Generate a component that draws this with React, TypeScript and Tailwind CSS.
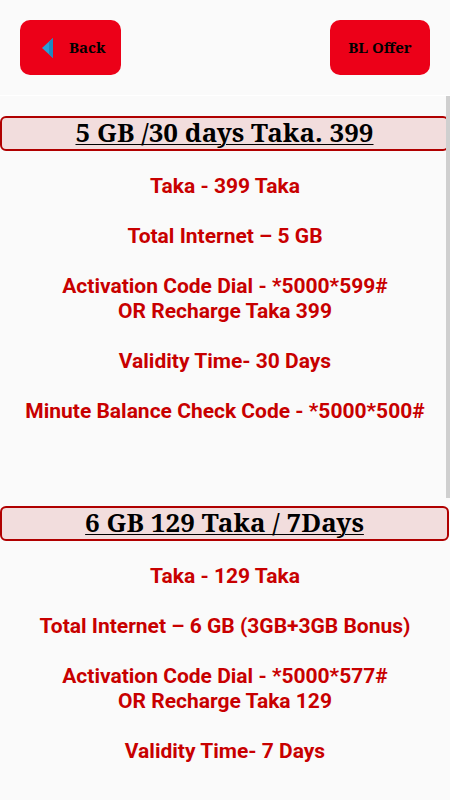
const PACKS = [
  {
    title: '5 GB /30 days Taka. 399',
    lines: [
      ['Taka - 399 Taka'],
      ['Total Internet – 5 GB'],
      ['Activation Code Dial - *5000*599#', 'OR Recharge Taka 399'],
      ['Validity Time- 30 Days'],
      ['Minute Balance Check Code - *5000*500#'],
    ],
  },
  {
    title: '6 GB 129 Taka / 7Days',
    lines: [
      ['Taka - 129 Taka'],
      ['Total Internet – 6 GB (3GB+3GB Bonus)'],
      ['Activation Code Dial - *5000*577#', 'OR Recharge Taka 129'],
      ['Validity Time- 7 Days'],
    ],
  },
]

const serif = "font-['Noto_Serif','DejaVu_Serif',serif]"

function BackIcon() {
  return (
    <svg width="12" height="20" viewBox="0 0 12 20" aria-hidden>
      <polygon points="11,0 11,20 0,10" fill="#2a9fd6" />
      <polygon points="11,0 11,20 7,16 7,4" fill="#1e88c0" />
    </svg>
  )
}

export default function App() {
  return (
    <div className="h-[800px] w-[450px] overflow-hidden bg-[#fafafa] font-['Roboto',sans-serif]">
      <header className="flex h-[95px] items-start justify-between px-5 pt-5">
        <button
          type="button"
          className={`flex h-[55px] w-[101px] items-center gap-[15px] rounded-[10px] bg-[#ec0018] pl-[22px] text-[15px] font-bold text-black ${serif}`}
        >
          <BackIcon />
          Back
        </button>
        <button
          type="button"
          className={`flex h-[55px] w-[100px] items-center justify-center rounded-[10px] bg-[#ec0018] text-[15px] font-bold text-black ${serif}`}
        >
          BL Offer
        </button>
      </header>

      <main className="relative border-t border-[#ffffff] pt-5">
        <div className="absolute right-0 top-0 h-[402px] w-[4px] bg-[#cfcfcf]" aria-hidden />
        {PACKS.map((pack, i) => (
          <section key={pack.title} className={i > 0 ? 'mt-[82px]' : ''}>
            <h2
              className={`mr-px flex h-[35px] items-center justify-center rounded-[6px] border-2 border-[#b00000] bg-[#f2dddd] pb-[3px] text-[26px] font-bold leading-none text-black underline decoration-1 underline-offset-[2px] ${serif}`}
            >
              {pack.title}
            </h2>
            <div className="mt-[23px] space-y-[25px] text-center text-[21px] font-bold leading-[25px] text-[#c80000]">
              {pack.lines.map((para) => (
                <p key={para[0]}>
                  {para.map((l) => (
                    <span key={l} className="block">
                      {l}
                    </span>
                  ))}
                </p>
              ))}
            </div>
          </section>
        ))}
      </main>
    </div>
  )
}
